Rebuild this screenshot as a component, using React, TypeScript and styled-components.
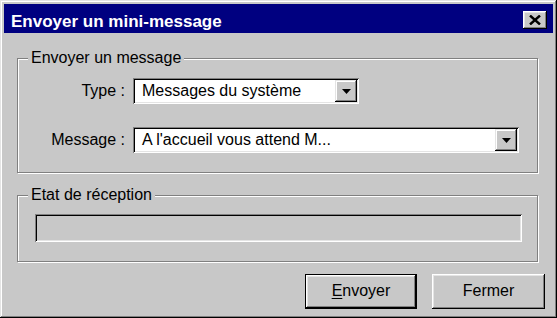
import React from "react";
import styled, { createGlobalStyle } from "styled-components";

const Global = createGlobalStyle`
  html, body { margin: 0; padding: 0; background: #c8c8c8; }
  * { box-sizing: border-box; }
`;

const FACE = "#c8c8c8";
const FONT = `"Liberation Sans", Arial, sans-serif`;

const Window = styled.div`
  width: 557px;
  height: 318px;
  padding: 4px;
  background: ${FACE};
  font-family: ${FONT};
  font-size: 16px;
  color: #000;
  display: flex;
  flex-direction: column;
  box-shadow: inset -1px -1px 0 #000, inset 1px 1px 0 #e4e4e4,
    inset -2px -2px 0 #808080, inset 2px 2px 0 #fff;
`;

const TitleBar = styled.div`
  height: 29px;
  background: #000080;
  display: flex;
  align-items: flex-start;
  justify-content: space-between;
  padding: 0 6px 0 7px;
`;

const Title = styled.div`
  margin-top: 8px;
  color: #fff;
  font-weight: bold;
  font-size: 17px;
  line-height: 20px;
`;

const CloseButton = styled.button`
  margin-top: 7px;
  width: 24px;
  height: 18px;
  padding: 0;
  border: none;
  background: ${FACE};
  display: flex;
  align-items: center;
  justify-content: center;
  box-shadow: inset -1px -1px 0 #000, inset 1px 1px 0 #fff,
    inset -2px -2px 0 #808080, inset 2px 2px 0 #e4e4e4;
`;

const Group = styled.div<{ $top: number; $height: number }>`
  position: relative;
  margin: ${(p) => p.$top}px 15px 0 13px;
  height: ${(p) => p.$height}px;
  border: 1px solid #808080;
  box-shadow: 1px 1px 0 #fff, inset 1px 1px 0 #fff;
`;

const Legend = styled.span`
  position: absolute;
  top: -10px;
  left: 10px;
  padding: 0 3px;
  line-height: 18px;
  background: ${FACE};
`;

const FormGrid = styled.div`
  display: grid;
  grid-template-columns: 107px 1fr;
  column-gap: 8px;
  row-gap: 23px;
  padding: 19px 18px 0 0;
  align-items: center;
`;

const Label = styled.label`
  text-align: right;
  line-height: 18px;
`;

const Combo = styled.div<{ $width?: number }>`
  width: ${(p) => (p.$width ? `${p.$width}px` : "auto")};
  height: 26px;
  padding: 2px;
  background: #fff;
  display: flex;
  box-shadow: inset 1px 1px 0 #808080, inset -1px -1px 0 #fff,
    inset 2px 2px 0 #000, inset -2px -2px 0 #e4e4e4;
`;

const ComboText = styled.div`
  flex: 1;
  padding-left: 7px;
  line-height: 22px;
  white-space: nowrap;
  overflow: hidden;
`;

const ArrowButton = styled.div`
  width: 22px;
  height: 22px;
  background: ${FACE};
  display: flex;
  align-items: center;
  justify-content: center;
  box-shadow: inset -1px -1px 0 #000, inset 1px 1px 0 #e4e4e4,
    inset -2px -2px 0 #808080, inset 2px 2px 0 #fff;
`;

const StatusWrap = styled.div`
  padding: 18px 15px 0 17px;
`;

const StatusField = styled.div`
  height: 28px;
  background: ${FACE};
  box-shadow: inset 1px 1px 0 #808080, inset -1px -1px 0 #fff,
    inset 2px 2px 0 #000, inset -2px -2px 0 #e4e4e4;
`;

const ButtonRow = styled.div`
  margin-top: 12px;
  display: flex;
  justify-content: flex-end;
  gap: 15px;
  padding-right: 8px;
`;

const Button = styled.button<{ $default?: boolean; $width: number }>`
  width: ${(p) => p.$width}px;
  height: 35px;
  padding: 0 0 2px;
  border: ${(p) => (p.$default ? "1px solid #000" : "none")};
  background: ${FACE};
  font-family: ${FONT};
  font-size: 16px;
  color: #000;
  box-shadow: inset -1px -1px 0 #000, inset 1px 1px 0 #fff,
    inset -2px -2px 0 #808080, inset 2px 2px 0 #e4e4e4;
  u { text-decoration-thickness: 1px; text-underline-offset: 2px; }
`;

const Arrow = () => (
  <svg width="9" height="5" viewBox="0 0 9 5">
    <path d="M0 0h9L4.5 5z" fill="#000" />
  </svg>
);

export default function App() {
  return (
    <>
      <Global />
      <Window>
        <TitleBar>
          <Title>Envoyer un mini-message</Title>
          <CloseButton aria-label="Fermer">
            <svg width="12" height="10" viewBox="0 0 12 10">
              <path d="M1 0.5l10 9M11 0.5l-10 9" stroke="#000" strokeWidth="2.4" />
            </svg>
          </CloseButton>
        </TitleBar>

        <Group $top={25} $height={115}>
          <Legend>Envoyer un message</Legend>
          <FormGrid>
            <Label>Type :</Label>
            <Combo $width={226}>
              <ComboText>Messages du système</ComboText>
              <ArrowButton>
                <Arrow />
              </ArrowButton>
            </Combo>
            <Label>Message :</Label>
            <Combo>
              <ComboText>A l'accueil vous attend M...</ComboText>
              <ArrowButton>
                <Arrow />
              </ArrowButton>
            </Combo>
          </FormGrid>
        </Group>

        <Group $top={22} $height={67}>
          <Legend>Etat de réception</Legend>
          <StatusWrap>
            <StatusField />
          </StatusWrap>
        </Group>

        <ButtonRow>
          <Button $default $width={112}>
            <u>E</u>nvoyer
          </Button>
          <Button $width={113}>Fermer</Button>
        </ButtonRow>
      </Window>
    </>
  );
}
